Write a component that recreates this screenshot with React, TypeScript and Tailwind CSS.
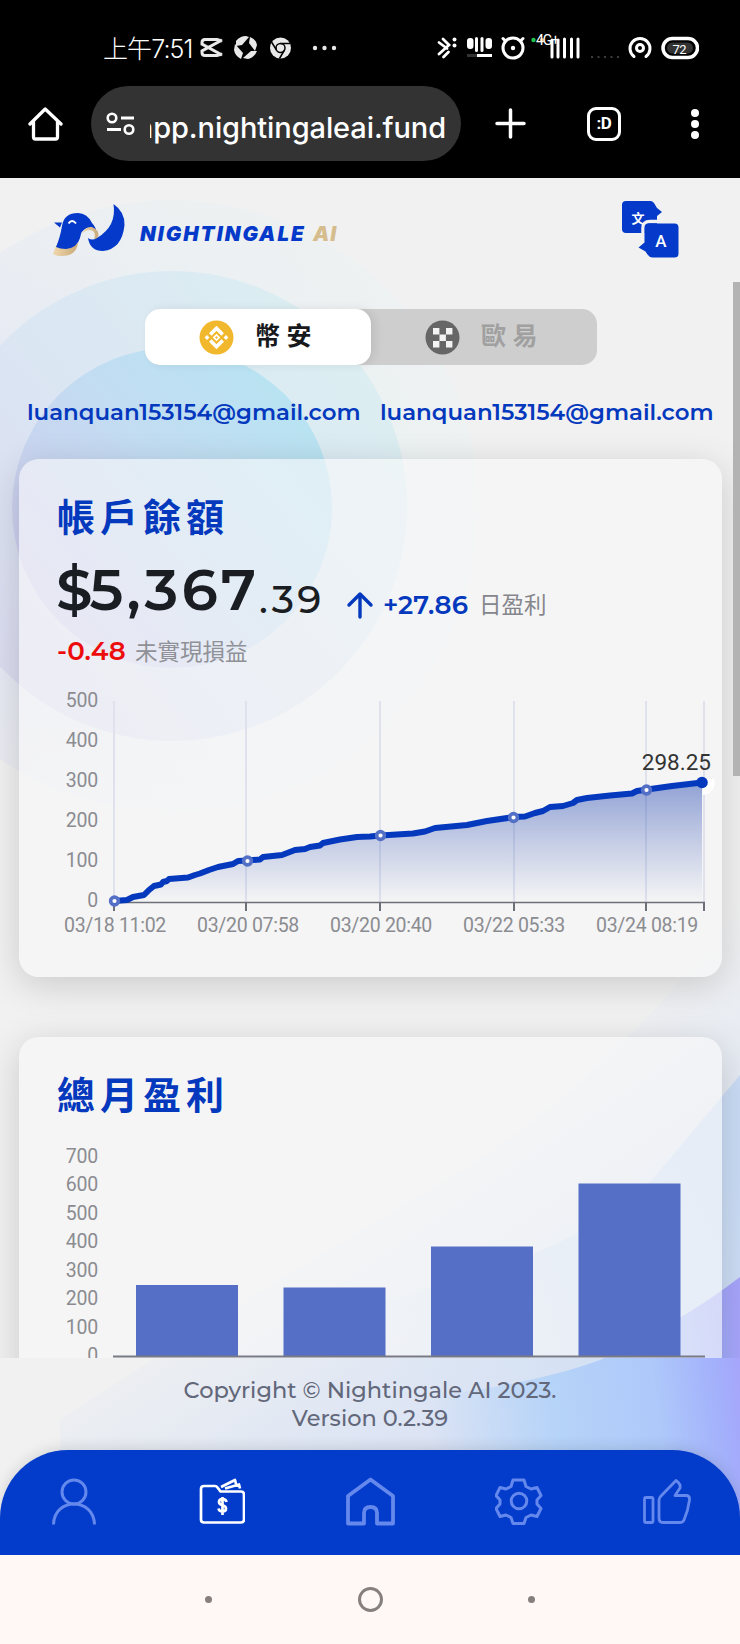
import type { ReactNode } from "react"

const montserrat = "font-[Montserrat,Inter,'Noto_Sans_CJK_TC',sans-serif]"
const cjk = "font-['Noto_Sans_CJK_TC',sans-serif]"

const StatusBar = () => {
  return (
    <div className="flex h-[86px] items-center pt-[10px] pl-[103px] pr-[41px]">
      <span className="w-[92px] whitespace-nowrap pt-[3px] text-[25px] leading-none tracking-[-0.9px] font-[Inter,'Noto_Sans_CJK_TC',sans-serif] font-light">上午7:51</span>
      <svg width="146" height="26" viewBox="198 35 146 26" className="ml-[3px]" fill="none" stroke="#e8e8e8">
        {/* capcut */}
        <path d="M222 41l-5-1.500h-12q-3 0-3 3v1.500l20 11M222 54l-5 1.500h-12q-3 0-3-3v-1.500l20-11" strokeWidth="3" />
        {/* shutter */}
        <g fill="#e8e8e8" stroke="none">
          <path d="M236 41q4-5 10-5l3 1-7 8-6 1zM250 37q6 2 7 8l-2 6-6-8zM257 51q-3 7-9 8l-5-1 8-7zM241 59q-6-3-7-9l1-6 8 9z" />
        </g>
        {/* chrome */}
        <circle cx="280.500" cy="48" r="10.500" fill="#e8e8e8" stroke="none" />
        <g stroke="#000" strokeWidth="1.500">
          <circle cx="280.500" cy="48" r="4.500" />
          <path d="M280.500 43.500h9.500M276.500 50l-5-8M284.500 50l-5 8.500" />
        </g>
        <circle cx="280.500" cy="48" r="2.800" fill="#e8e8e8" stroke="none" />
        <g fill="#e8e8e8" stroke="none">
          <circle cx="315" cy="48" r="2.200" />
          <circle cx="324.500" cy="48" r="2.200" />
          <circle cx="334" cy="48" r="2.200" />
        </g>
      </svg>
      <svg width="264" height="30" viewBox="435 33 264 30" className="ml-auto" fill="none" stroke="#fff">
        {/* bluetooth */}
        <path d="M439 42.500l8 6M443 39l6 6-10 9M443.500 57l5-5" strokeWidth="2.800" strokeLinecap="round" />
        <g fill="#fff" stroke="none">
          <circle cx="454.500" cy="39.500" r="2" />
          <circle cx="454.500" cy="45.500" r="2" />
          <rect x="467" y="38" width="6.500" height="11" rx="3" />
          <rect x="475" y="37" width="3" height="15" rx="1.500" />
          <rect x="480.500" y="37" width="3" height="15" rx="1.500" />
          <rect x="485.500" y="38" width="6.500" height="11" rx="3" />
          <rect x="467" y="54" width="10" height="3" fill="#333" />
          <rect x="477" y="54" width="15" height="3" />
        </g>
        {/* alarm */}
        <circle cx="513" cy="48" r="10" strokeWidth="3" />
        <circle cx="513" cy="48" r="2.200" fill="#fff" stroke="none" />
        <path d="M503 38.500l2 2M523 38.500l-2 2" strokeWidth="3" strokeLinecap="round" />
        {/* signal */}
        <path d="M552 40v17M558 40v17M564.500 39v18M571.500 39v18M578 39v18" strokeWidth="3" strokeLinecap="round" />
        <circle cx="533.500" cy="40" r="2.200" fill="#1fc24a" stroke="none" />
        <circle cx="542" cy="40" r="2" fill="#eca63a" stroke="none" />
        <text x="536" y="45" fontSize="14" letterSpacing="-1" fill="#fff" stroke="none" className="font-[Roboto,sans-serif]">4G+</text>
        <path d="M591 57h28" strokeWidth="2" stroke="#3c3c3c" strokeDasharray="2 4.500" />
        {/* hotspot */}
        <path d="M634 56.500a10 10 0 1 1 12 0" strokeWidth="3" strokeLinecap="round" />
        <circle cx="640" cy="48" r="3.500" strokeWidth="3" />
        <rect x="663" y="38.500" width="34.500" height="19" rx="9.500" strokeWidth="3.500" />
        <rect x="667" y="42.500" width="26" height="11" rx="5.500" fill="#333" stroke="none" />
        <text x="672.500" y="53.500" fontSize="13" letterSpacing="-0.500" fill="#fff" stroke="none" className="font-[Roboto,sans-serif]">72</text>
      </svg>
    </div>
  )
}

const BrowserBar = () => {
  return (
    <div className="flex h-[75px] items-center pl-[28px] pr-[40px]">
      <svg width="35" height="36" viewBox="0 0 35 36" fill="none" stroke="#fff" strokeWidth="3.300" strokeLinejoin="round" strokeLinecap="round">
        <path d="M2 18L17.200 3L33 18M5.500 15.500V31q0 2 2 2h20q2 0 2-2V15.500" />
      </svg>
      <div className="ml-[28px] flex h-[75px] w-[370px] items-center rounded-full bg-[#333333] pl-[15px]">
        <svg width="30" height="26" viewBox="0 0 30 26" fill="none" stroke="#fff" strokeWidth="2.600">
          <circle cx="6" cy="7" r="4.300" />
          <path d="M15 7h13M1 18.500h14" strokeWidth="3" />
          <circle cx="23" cy="18.500" r="4.300" />
        </svg>
        <div className="ml-[14px] flex w-[296px] justify-end overflow-hidden pt-[8px]">
          <span className="whitespace-nowrap text-[29px] leading-[36px] tracking-[-0.100px] font-[Inter,sans-serif] font-medium">app.nightingaleai.fund</span>
        </div>
      </div>
      <svg width="31" height="31" viewBox="0 0 31 31" className="ml-[34px]" stroke="#fff" strokeWidth="3.500" strokeLinecap="round">
        <path d="M15.500 2v27M2 15.500h27" />
      </svg>
      <div className="ml-[61px] flex size-[34px] items-center justify-center rounded-[9px] border-[3px] border-white text-[17px] leading-none tracking-[-0.500px] font-[Roboto,sans-serif] font-bold">:D</div>
      <svg width="10" height="32" viewBox="0 0 10 32" className="ml-auto" fill="#fff">
        <circle cx="5" cy="5" r="4" />
        <circle cx="5" cy="16" r="4" />
        <circle cx="5" cy="27" r="4" />
      </svg>
    </div>
  )
}

const Background = () => {
  return (
    <svg className="absolute inset-0" width="740" height="1376" viewBox="0 178 740 1376">
      <defs>
        <linearGradient id="outer" x1="0" y1="0.600" x2="1" y2="0.300">
          <stop offset="0" stopColor="#e3e4f4" />
          <stop offset="0.550" stopColor="#e8eff3" />
          <stop offset="1" stopColor="#eef2f2" />
        </linearGradient>
        <linearGradient id="outerFade" x1="0" y1="0" x2="0" y2="1">
          <stop offset="0" stopColor="#f1f1f1" stopOpacity="0.500" />
          <stop offset="0.300" stopColor="#f1f1f1" stopOpacity="0" />
          <stop offset="0.700" stopColor="#f1f1f1" stopOpacity="0" />
          <stop offset="1" stopColor="#f1f1f1" stopOpacity="0.700" />
        </linearGradient>
        <linearGradient id="mid" x1="0.100" y1="0.850" x2="0.900" y2="0.200">
          <stop offset="0" stopColor="#dbdcf0" />
          <stop offset="0.500" stopColor="#dbe6f3" />
          <stop offset="1" stopColor="#dceef2" />
        </linearGradient>
        <linearGradient id="inner" x1="0.100" y1="0.800" x2="0.850" y2="0.150">
          <stop offset="0" stopColor="#cfceee" />
          <stop offset="0.550" stopColor="#c3dcf2" />
          <stop offset="1" stopColor="#b9e3f2" />
        </linearGradient>
        <linearGradient id="haze" gradientUnits="userSpaceOnUse" x1="440" y1="1100" x2="640" y2="1400">
          <stop offset="0" stopColor="#dde6f4" stopOpacity="0" />
          <stop offset="0.600" stopColor="#dde5f4" stopOpacity="0.900" />
          <stop offset="1" stopColor="#d8def4" />
        </linearGradient>
        <linearGradient id="wave1" gradientUnits="userSpaceOnUse" x1="400" y1="1400" x2="740" y2="1180">
          <stop offset="0" stopColor="#d6e4f4" stopOpacity="0" />
          <stop offset="0.500" stopColor="#d2e1f4" stopOpacity="0.900" />
          <stop offset="1" stopColor="#cadcf6" />
        </linearGradient>
        <linearGradient id="wave2" gradientUnits="userSpaceOnUse" x1="430" y1="1440" x2="745" y2="1400">
          <stop offset="0" stopColor="#b8d6f8" stopOpacity="0" />
          <stop offset="0.400" stopColor="#b6d3f8" />
          <stop offset="0.720" stopColor="#aec9fa" />
          <stop offset="0.920" stopColor="#a3b0fb" />
          <stop offset="1" stopColor="#a6a5fb" />
        </linearGradient>
      </defs>
      <rect y="178" width="740" height="1376" fill="#f1f1f1" />
      <circle cx="172" cy="506" r="306" fill="url(#outer)" />
      <circle cx="172" cy="506" r="307" fill="url(#outerFade)" />
      <circle cx="172" cy="506" r="235" fill="url(#mid)" />
      <circle cx="172" cy="508" r="160" fill="url(#inner)" />
      <path d="M740 900Q620 1080 430 1190T60 1420V1554H740z" fill="url(#haze)" />
      <path d="M740 1075L652 1180Q590 1240 480 1272T300 1340V1554H740z" fill="url(#wave1)" />
      <path d="M740 1277Q680 1323 600 1360Q530 1386 400 1400V1554H740z" fill="url(#wave2)" />
    </svg>
  )
}

const Logo = () => {
  return (
    <div className="flex items-center">
      <svg width="74" height="56" viewBox="52 202 74 56">
        <defs>
          <linearGradient id="gold" x1="0" y1="0" x2="1" y2="0">
            <stop offset="0" stopColor="#f0d8ac" />
            <stop offset="1" stopColor="#c9a877" />
          </linearGradient>
        </defs>
        <path d="M56 246Q66 251 78 243Q76 256 62 256Q56 256 53 254z" fill="url(#gold)" />
        <path d="M54 222.500h8l-2 5z" fill="#0439c9" />
        <path d="M56 247Q60 238 62 226Q64 213 78 213Q87 213 92 223Q96 227 97 234Q93 227 87 228Q81 230 80 238Q77 248 66 249Q60 249 56 247z" fill="#0439c9" />
        <path d="M68.500 223.500Q72 218.500 76 223.500" stroke="#fff" strokeWidth="2" fill="none" />
        <path d="M82 234Q85 226 92 227Q99 230 98.500 236Q97 239 94 240Q97 231 90 230Q85 230 82 234z" fill="url(#gold)" />
        <path d="M113.500 204Q125 212 124.500 225Q122 249 103 251Q90 251 88 238Q92 241 97 238Q117 226 113.500 204z" fill="#0439c9" />
      </svg>
      <div className="ml-[14px] mt-[8px] flex gap-[6px] text-[20.500px] leading-none font-[Inter,sans-serif] font-black italic">
        <span className="w-[167px] tracking-[2px] text-[#0439c9]">NIGHTINGALE</span>
        <span className="tracking-[1px] text-[#d6bd8e]">AI</span>
      </div>
    </div>
  )
}

const TranslateIcon = () => {
  return (
    <svg width="58" height="58" viewBox="621.500 201.500 58 58">
      <path d="M626 201.500h25q2 0 3.500 2l3 5 5 4-5 4v17h-31q-4 0-4-4v-24q0-4 4-4z" fill="#0439c9" />
      <text x="632" y="223.500" fontSize="13" fontWeight="700" fill="#fff" className="font-['Noto_Sans_CJK_TC',sans-serif]">文</text>
      <path d="M643.500 236v-7q0-7 7-7h12" stroke="#f1f1f1" strokeWidth="3.500" fill="none" />
      <path d="M649 224h26q4 0 4 4v26q0 4-4 4h-22q-3 0-5-3l-2-3-7-4 6-5v-15q0-4 4-4z" fill="#0439c9" />
      <text x="661.500" y="247.500" textAnchor="middle" fontSize="17" fontWeight="500" fill="#fff" className="font-[Roboto,sans-serif]">A</text>
    </svg>
  )
}

const ExchangeTabs = () => {
  return (
    <div className="ml-[145px] mt-[50px] flex h-[56px] w-[452px] shrink-0 rounded-[15px] bg-[#cecece]">
      <button className="flex w-[226px] items-center rounded-[15px] bg-white pl-[54px] shadow-[4px_0_10px_rgba(0,0,0,0.080)]">
        <svg width="35" height="35" viewBox="0 0 35 35">
          <circle cx="17.500" cy="17.500" r="17" fill="#f2b82d" />
          <g fill="none" stroke="#fff" strokeWidth="3.600">
            <path d="M11.300 14.500l6.200-6.200 6.200 6.200M11.300 20.500l6.200 6.200 6.200-6.200" />
          </g>
          <g fill="#fff">
            <path d="M17.500 13.700l3.800 3.800-3.800 3.800-3.800-3.800z" />
            <path d="M8 15.100l2.400 2.400L8 19.900l-2.400-2.400zM27 15.100l2.400 2.400-2.400 2.400-2.400-2.400z" />
          </g>
          <path d="M17.500 16.100l1.400 1.400-1.400 1.400-1.400-1.400z" fill="#f2b82d" />
        </svg>
        <span className={`${cjk} ml-[21px] pb-[5px] text-[25px] leading-none font-bold tracking-[6.500px] text-[#17191c]`}>幣安</span>
      </button>
      <button className="flex items-center pl-[54px]">
        <svg width="35" height="35" viewBox="0 0 35 35">
          <circle cx="17.500" cy="17.500" r="17" fill="#666666" />
          <path d="M8 8h6.400v6.400H8zM21 8h6.400v6.400H21zM14.500 14.500h6.400v6.400h-6.400zM8 21h6.400v6.400H8zM21 21h6.400v6.400H21z" fill="#f3f3f3" />
        </svg>
        <span className={`${cjk} ml-[21px] pb-[5px] text-[25px] leading-none font-bold tracking-[6.500px] text-[#a0a0a0]`}>歐易</span>
      </button>
    </div>
  )
}

const Card = ({ title, className, children }: { title: string; className: string; children: ReactNode }) => {
  return (
    <section className={`ml-[19px] w-[703px] shrink-0 rounded-[20px] bg-[#f8f8f8]/60 shadow-[0_8px_36px_rgba(0,0,0,0.160)] ${className}`}>
      <h2 className={`${cjk} pl-[38px] pt-[35px] text-[38px] leading-[42px] font-bold tracking-[5px] text-[#0439be]`}>{title}</h2>
      {children}
    </section>
  )
}

const profitLine =
  "114,901 127,900 133,897 144,895 149,890 154,886 161,884.5 163,882 167,881 169,879 188,877.5 195,875 200,873.500 209,870 218,867 233,864 238,861 247,860.500 260,859.500 263,857 282,855 295,850 305,849 310,847 320,845.500 323,843 340,839.500 357,837 370,836.500 380.500,835.500 413,833.500 425,831.500 435,828 467,825 487,821 514,817 525,816.500 535,813 543,811 550,807 563,806 573,803 577,800 587,798 610,795.500 632,793.500 637,791 647,789.500 672,786 702,782.500"

const ticks = [114, 246, 380, 514, 646, 704]
const times = [
  { x: 115, label: "03/18 11:02" },
  { x: 248, label: "03/20 07:58" },
  { x: 381, label: "03/20 20:40" },
  { x: 514, label: "03/22 05:33" },
  { x: 647, label: "03/24 08:19" },
]
const markers = [
  [114.500, 901],
  [247.500, 861],
  [380.500, 835.500],
  [513.500, 817.500],
  [646.500, 790],
]

const LineChart = () => {
  return (
    <svg width="703" height="260" viewBox="19 685 703 260" className="font-[Roboto,sans-serif]">
      <defs>
        <linearGradient id="area" gradientUnits="userSpaceOnUse" x1="0" y1="782" x2="0" y2="902">
          <stop offset="0" stopColor="#1a3fae" stopOpacity="0.460" />
          <stop offset="0.500" stopColor="#1a3fae" stopOpacity="0.220" />
          <stop offset="1" stopColor="#1a3fae" stopOpacity="0" />
        </linearGradient>
      </defs>
      {ticks.map((x) => (
        <path key={x} d={`M${x} 701V902`} stroke="#dfe2ec" strokeWidth="2" />
      ))}
      <polygon points={`${profitLine} 702,902 114,902`} fill="url(#area)" />
      <path d="M113 902.500H705" stroke="#6e7079" strokeWidth="1.600" />
      {ticks.map((x) => (
        <path key={x} d={`M${x} 902V911`} stroke="#6e7079" strokeWidth="2" />
      ))}
      <path d="M703 795a12 12 0 0 0 11-16h-11z" fill="#fff" />
      <polyline points={profitLine} fill="none" stroke="#0439be" strokeWidth="6" strokeLinejoin="round" />
      {markers.map(([x, y]) => (
        <circle key={x} cx={x} cy={y} r="3.900" fill="#fff" stroke="#5470c6" strokeWidth="3.600" />
      ))}
      <circle cx="702" cy="782.500" r="5.800" fill="#0439be" />
      <text x="711" y="770" textAnchor="end" fontSize="22.500" fill="#333">298.25</text>
      {[500, 400, 300, 200, 100, 0].map((n, i) => (
        <text key={n} x="98" y={706.5 + i * 40.1} textAnchor="end" fontSize="19.500" letterSpacing="-0.200" fill="#8b8c91">{n}</text>
      ))}
      {times.map((t) => (
        <text key={t.label} x={t.x} y="931.500" textAnchor="middle" fontSize="19.500" letterSpacing="-0.300" fill="#8b8c91">{t.label}</text>
      ))}
    </svg>
  )
}

const bars = [
  { x: 136, top: 1285 },
  { x: 283.5, top: 1287.5 },
  { x: 431, top: 1246.5 },
  { x: 578.5, top: 1183.5 },
]

const BarChart = () => {
  return (
    <svg width="703" height="260" viewBox="19 1135 703 260" className="font-[Roboto,sans-serif]">
      {bars.map((b) => (
        <rect key={b.x} x={b.x} y={b.top} width="102" height={1356 - b.top} fill="#546fc5" />
      ))}
      <path d="M113 1356.500H705" stroke="#787a85" strokeWidth="2" />
      {[700, 600, 500, 400, 300, 200, 100, 0].map((n, i) => (
        <text key={n} x="98" y={1162.8 + i * 28.45} textAnchor="end" fontSize="19.500" letterSpacing="-0.200" fill="#8b8c91">{n}</text>
      ))}
    </svg>
  )
}

const Balance = () => {
  return (
    <div className={`${montserrat} pl-[38px]`}>
      <div className="mt-[15px] flex h-[78px] items-baseline text-[#1a1d22]">
        <span className="w-[202px] whitespace-nowrap text-[58px] leading-[78px] font-semibold tracking-[3.200px]"><span className="-ml-[1px] tracking-[-3px]">$</span>5,367</span>
        <span className="w-[74px] translate-y-[3px] text-[39px] leading-none font-medium tracking-[3.400px]">.39</span>
        <svg width="28" height="28" viewBox="0 0 28 28" className="ml-[13px] translate-y-[9px]" fill="none" stroke="#0439be" strokeWidth="3.400" strokeLinecap="round" strokeLinejoin="round">
          <path d="M14 26V3M3 14L14 3L25 14" />
        </svg>
        <span className="ml-[9px] w-[87px] translate-y-[4px] text-[26px] leading-none font-semibold tracking-[0.100px] text-[#0439be]">+27.86</span>
        <span className={`${cjk} ml-[9px] translate-y-[3px] text-[22.500px] leading-none font-normal text-[#85868c]`}>日盈利</span>
      </div>
      <div className="mt-[6px] flex items-baseline">
        <span className="w-[69px] text-[26px] leading-[32px] font-semibold tracking-[0.100px] text-[#ec0c0c]">-0.48</span>
        <span className={`${cjk} ml-[9px] text-[22.500px] leading-none font-normal text-[#909197]`}>未實現損益</span>
      </div>
    </div>
  )
}

const BottomNav = () => {
  return (
    <nav className="relative flex h-[105px] items-center justify-between rounded-t-[68px] bg-[#033ccb] pl-[50px] pr-[48px] pb-[4px] shadow-[0_-2px_14px_rgba(0,0,0,0.120)]">
      <svg width="48" height="50" viewBox="50 1475 48 50" fill="none" stroke="#6488ec" strokeWidth="3">
        <circle cx="74" cy="1491" r="12" />
        <path d="M53.500 1523.500C54 1496 94 1496 94.500 1523.500" />
      </svg>
      <svg width="48" height="50" viewBox="197 1476 48 50" fill="none" stroke="#fff" strokeWidth="2.700" strokeLinejoin="round">
        <path d="M201 1489q0-3 3-3h11q1.500 0 2.500 1.500l3 4h20.500q3 0 3 3v25q0 3-3 3h-37q-3 0-3-3z" />
        <path d="M221 1487l14-7 1 4M225 1488.500l14-4 1 4" />
        <path d="M226.500 1502q-.500-3-4-3t-3.500 3q0 2.200 3.500 3.200t3.500 3.300q0 3-3.500 3t-4-3M222.500 1497v18" />
      </svg>
      <svg width="52" height="50" viewBox="344 1476 52 50" fill="none" stroke="#6488ec" strokeWidth="3.800" strokeLinejoin="round">
        <path d="M348 1496L370.500 1479.500L393 1496V1523.500H377V1513q0-6-6.500-6t-6.500 6v10.500h-16z" />
      </svg>
      <svg width="48" height="50" viewBox="495 1476 48 50" fill="none" stroke="#6488ec" strokeWidth="3" strokeLinejoin="round">
        <circle cx="519" cy="1501" r="7.800" />
        <path d="M513 1480h11l2 6.500 5 2.500 6-1.500 4 8-4 4.500v4l4 4.500-4 8-6-1.500-5 2.500-2 6h-11l-2-6-5-2.500-6 1.500-4-8 4-4.500v-4l-4-4.500 4-8 6 1.500 5-2.500z" />
      </svg>
      <svg width="50" height="50" viewBox="642 1476 50 50" fill="none" stroke="#6488ec" strokeWidth="2.800" strokeLinejoin="round">
        <rect x="644.500" y="1497.500" width="8.500" height="25" rx="1.500" />
        <path d="M659 1500Q659 1498 661 1496L676 1480.500Q681 1484 680 1488L675 1495.500H687Q690 1496 689.500 1500Q688 1511 684 1520Q683 1522.500 680 1522.500H663Q659 1522.500 659 1518z" />
      </svg>
    </nav>
  )
}

const App = () => {
  return (
    <div className="flex h-[1644px] w-[740px] flex-col overflow-hidden bg-[#fff8f5]">
      <header className="h-[178px] shrink-0 bg-black text-white">
        <StatusBar />
        <BrowserBar />
      </header>

      <div className="relative flex h-[1377px] shrink-0 flex-col overflow-hidden bg-[#f1f1f1]">
        <Background />
        <main className="relative flex h-[1180px] flex-col overflow-hidden">
          <div className="flex shrink-0 items-center justify-between pl-[52px] pr-[61px] pt-[23px]">
            <Logo />
            <TranslateIcon />
          </div>
          <ExchangeTabs />
          <div className={`${montserrat} mt-[31px] flex h-[32px] shrink-0 items-center gap-[20px] pl-[27px] text-[22.900px] font-semibold text-[#0439be]`}>
            <span className="w-[333px] whitespace-nowrap">luanquan153154@gmail.com</span>
            <span className="w-[333px] whitespace-nowrap">luanquan153154@gmail.com</span>
          </div>
          <Card title="帳戶餘額" className="mt-[31px] h-[518px]">
            <Balance />
            <div className="mt-[18px]">
              <LineChart />
            </div>
          </Card>
          <Card title="總月盈利" className="mt-[60px] h-[518px]">
            <div className="mt-[21px]">
              <BarChart />
            </div>
          </Card>
          {/* scrollbar thumb */}
          <div className="absolute right-0 top-[104px] h-[494px] w-[7px] bg-[#b3b3b3]" />
        </main>
        <footer className={`${montserrat} relative flex h-[92px] flex-col items-center pt-[18px] text-[22.500px] leading-[28px] font-medium text-[#62677a]`}>
          <p>Copyright © Nightingale AI 2023.</p>
          <p>Version 0.2.39</p>
        </footer>
        <BottomNav />
      </div>

      <div className="flex flex-1 items-center justify-center">
        <span className="size-[7px] rounded-full bg-[#85807d]" />
        <span className="ml-[146px] mr-[145px] size-[25px] rounded-full border-[3px] border-[#85807d]" />
        <span className="size-[7px] rounded-full bg-[#85807d]" />
      </div>
    </div>
  )
}

export default App
